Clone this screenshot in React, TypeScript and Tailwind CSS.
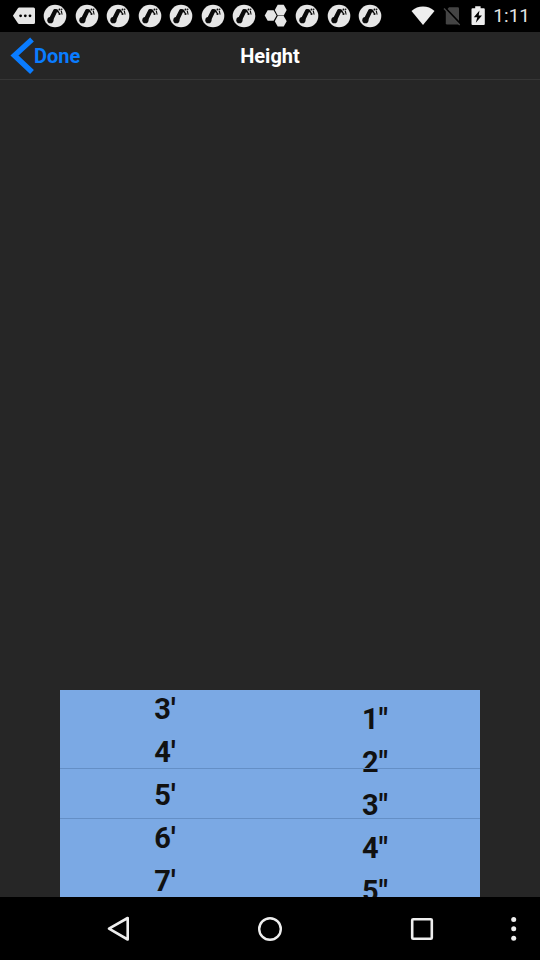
import { useState } from "react";

function MoreIcon() {
  return (
    <svg viewBox="0 0 24 24" className="h-6 w-6" fill="#e6e6e6" aria-hidden="true">
      <path d="M7.2 3.500h14.300a1.500 1.500 0 0 1 1.500 1.500v13.500a1.500 1.500 0 0 1-1.500 1.500H7.200a1.600 1.600 0 0 1-1.300-.7L.9 11.800l5-7.600a1.600 1.600 0 0 1 1.300-.7z" />
      <circle cx="8.600" cy="11.800" r="1.400" fill="#000" />
      <circle cx="13.300" cy="11.800" r="1.400" fill="#000" />
      <circle cx="18" cy="11.800" r="1.400" fill="#000" />
    </svg>
  );
}

function BoneIcon() {
  return (
    <svg viewBox="0 0 24 24" className="h-6 w-6" aria-hidden="true">
      <circle cx="12" cy="12" r="11.300" fill="#e6e6e6" />
      <g fill="#0a0a0a">
        <path d="M10.200 6.200Q10.800 4.800 12.200 5L13.800 5.300Q15 6 14.300 7.500L9.900 16.800L6 14.500z" />
        <circle cx="7.400" cy="16.200" r="3.100" />
        <path d="M13.600 5.300L14.900 5.700L16.900 9.200L16.200 9.800L13.400 7.600z" />
        <circle cx="16.500" cy="10" r="1.100" />
        <circle cx="16.500" cy="5.600" r="1" />
        <circle cx="18.700" cy="5.200" r=".8" />
        <path d="M17.600 6.800L18.800 6.600L19.600 10.500L18.700 10.800z" />
      </g>
    </svg>
  );
}

function HexagonsIcon() {
  return (
    <svg viewBox="0 0 24 24" className="h-6 w-6" fill="#e6e6e6" aria-hidden="true">
      <path d="M3.700 6.200h5.900l3 5.300-3 5.300H3.700l-3-5.300z" />
      <path d="M13.700 .8h6l3 5.300-3 5.300h-6l-2.900-5.300z" />
      <path d="M13.700 11.900h6l3 5.300-3 5.300h-6l-2.900-5.300z" />
    </svg>
  );
}

function WifiIcon() {
  return (
    <svg viewBox="0 0 24 20" className="h-5 w-6" fill="#eee" aria-hidden="true">
      <path d="M.5 5Q5.600 .6 12 .6t11.500 4.400L12 19z" />
    </svg>
  );
}

function NoSimIcon() {
  return (
    <svg viewBox="0 0 18 20" className="h-5 w-[18px]" aria-hidden="true">
      <path d="M6 1.200h8.800a1.200 1.200 0 0 1 1.200 1.200v14.800a1.200 1.200 0 0 1-1.200 1.200H4a1.200 1.200 0 0 1-1.200-1.200V5z" fill="#444" />
      <path d="M2.200 2L17.500 18" stroke="#000" strokeWidth="2" />
      <path d="M1 2.500L16.700 19" stroke="#484848" strokeWidth="1.300" />
    </svg>
  );
}

function BatteryIcon() {
  return (
    <svg viewBox="0 0 14 20" className="h-5 w-3.5" aria-hidden="true">
      <path d="M4.200 .2h5.400v2h3.200a1 1 0 0 1 1 1v14.800a1 1 0 0 1-1 1H1.500a1 1 0 0 1-1-1V3.200a1 1 0 0 1 1-1h2.700z" fill="#eee" />
      <path d="M8.500 4.500L2.800 11.200h3.500L4.800 16.800l6.200-7.200H7.700z" fill="#000" />
    </svg>
  );
}

function StatusBar() {
  return (
    <div className="flex h-8 items-center justify-between bg-black pl-3 pr-2.5">
      <div className="flex w-[370px] items-center justify-between">
        <MoreIcon />
        {[1, 2, 3, 4, 5, 6, 7].map((n) => (
          <BoneIcon key={n} />
        ))}
        <HexagonsIcon />
        {[8, 9, 10].map((n) => (
          <BoneIcon key={n} />
        ))}
      </div>
      <div className="flex items-center">
        <WifiIcon />
        <span className="ml-2 flex">
          <NoSimIcon />
        </span>
        <span className="ml-2.5 flex">
          <BatteryIcon />
        </span>
        <span className="ml-2 text-[19px] leading-6 text-[#e4e4e4]">1:11</span>
      </div>
    </div>
  );
}

function Header() {
  return (
    <header className="grid h-12 grid-cols-3 items-center border-b border-[#363636] text-[20px] font-bold leading-6">
      <button type="button" className="flex items-center justify-self-start pl-2.5 text-[#0a7cff]">
        <svg viewBox="0 0 24 38" className="h-[38px] w-6" fill="none" stroke="#0a7cff" strokeWidth="5.500" aria-hidden="true">
          <path d="M22 2.500L4.500 18.500L22 35" />
        </svg>
        Done
      </button>
      <h1 className="text-center text-white">Height</h1>
    </header>
  );
}

type ColumnProps = {
  label: string;
  values: string[];
  selected: string;
  onSelect: (value: string) => void;
  className: string;
};

function PickerColumn({ label, values, selected, onSelect, className }: ColumnProps) {
  return (
    <div role="group" aria-label={label} className={`flex flex-1 flex-col overflow-hidden ${className}`}>
      {values.map((value) => (
        <button
          key={value}
          type="button"
          aria-pressed={value === selected}
          onClick={() => onSelect(value)}
          className="h-[43px] shrink-0 text-[29px] font-bold leading-[43px] text-[#111]"
        >
          {value}
        </button>
      ))}
    </div>
  );
}

function HeightPicker() {
  const [feet, setFeet] = useState("5'");
  const [inches, setInches] = useState('3"');
  return (
    <div className="relative mx-[60px] flex h-[207px] bg-[#7ba9e4]">
      <PickerColumn label="Feet" values={["3'", "4'", "5'", "6'", "7'"]} selected={feet} onSelect={setFeet} className="justify-center pt-1" />
      <PickerColumn label="Inches" values={['1"', '2"', '3"', '4"', '5"']} selected={inches} onSelect={setInches} className="pt-2" />
      <div className="pointer-events-none absolute inset-x-0 top-[78px] h-[51px] border-y border-[#648fc6]" />
    </div>
  );
}

function NavigationBar() {
  return (
    <nav className="relative flex h-[63px] items-center justify-center gap-32 bg-black">
      <button type="button" aria-label="Back" className="flex">
        <svg viewBox="0 0 24 26" className="h-[26px] w-6" fill="none" stroke="#eee" strokeWidth="2.600" strokeLinejoin="round" aria-hidden="true">
          <path d="M21.700 2V23.500L3 12.700z" />
        </svg>
      </button>
      <button type="button" aria-label="Home" className="flex">
        <svg viewBox="0 0 24 24" className="h-6 w-6" fill="none" stroke="#eee" strokeWidth="2.400" aria-hidden="true">
          <circle cx="12" cy="12" r="10.800" />
        </svg>
      </button>
      <button type="button" aria-label="Recent apps" className="flex">
        <svg viewBox="0 0 24 24" className="h-6 w-6" fill="none" stroke="#eee" strokeWidth="2.600" aria-hidden="true">
          <rect x="2.200" y="2.200" width="19.600" height="19.600" rx="1" />
        </svg>
      </button>
      <button type="button" aria-label="Menu" className="absolute inset-y-0 right-5 flex items-center">
        <svg viewBox="0 0 12 26" className="h-[26px] w-3" fill="#eee" aria-hidden="true">
          <circle cx="5.700" cy="3.500" r="2.500" />
          <circle cx="5.700" cy="12.800" r="2.500" />
          <circle cx="5.700" cy="22.200" r="2.500" />
        </svg>
      </button>
    </nav>
  );
}

export default function App() {
  return (
    <div className="flex min-h-screen flex-col bg-[#262626] font-['Roboto',sans-serif]">
      <StatusBar />
      <Header />
      <main className="flex flex-1 flex-col justify-end">
        <HeightPicker />
      </main>
      <NavigationBar />
    </div>
  );
}
